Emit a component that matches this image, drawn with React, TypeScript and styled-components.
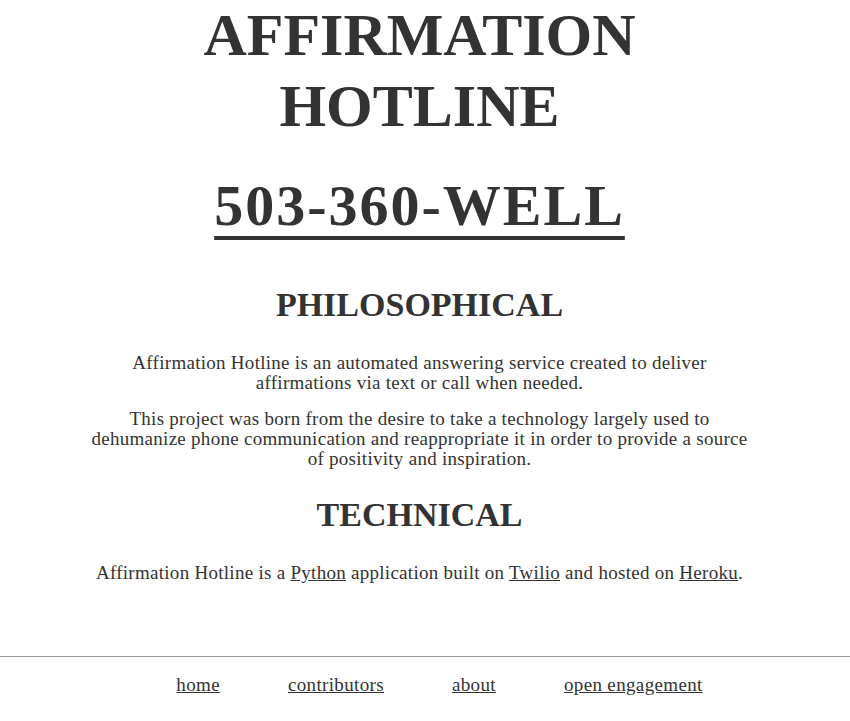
import React from "react";
import styled, { createGlobalStyle } from "styled-components";

const Global = createGlobalStyle`
  html, body { margin: 0; padding: 0; background: #fff; }
  body { color: #333; font-family: "Liberation Serif", serif; }
`;

const Page = styled.div`
  display: flex;
  flex-direction: column;
`;

const Main = styled.main`
  display: flex;
  flex-direction: column;
  align-items: center;
  padding: 0 11px 0 0;
`;

const Title = styled.h1`
  margin: 0;
  font-family: "Liberation Serif", serif;
  font-weight: 700;
  font-size: 60px;
  line-height: 71px;
  text-align: center;
  color: #333;
`;

const Phone = styled.a`
  margin-top: 30px;
  font-family: "Liberation Serif", serif;
  font-weight: 700;
  font-size: 58px;
  letter-spacing: 2px;
  line-height: 68px;
  color: #333;
  text-decoration: underline;
  text-decoration-thickness: 4px;
  text-underline-offset: 11px;
`;

const SectionTitle = styled.h2<{ $top: number }>`
  margin: ${(p) => p.$top}px 0 30px;
  font-family: "Liberation Serif", serif;
  font-weight: 700;
  font-size: 34px;
  line-height: 36px;
  text-align: center;
  color: #333;
`;

const Text = styled.p`
  margin: 0 0 16px;
  max-width: 668px;
  font-family: "Liberation Serif", serif;
  font-size: 19px;
  letter-spacing: 0.28px;
  line-height: 20px;
  text-align: center;
  color: #333;
`;

const Link = styled.a`
  color: #333;
  text-decoration: underline;
`;

const Rule = styled.hr`
  margin: 57px 0 0;
  border: 0;
  border-top: 1px solid #999;
  width: 100%;
`;

const Footer = styled.nav`
  display: flex;
  justify-content: center;
  gap: 68px;
  padding: 18px 0 0 29px;
`;

const NavLink = styled.a`
  font-family: "Liberation Serif", serif;
  font-size: 19px;
  letter-spacing: 0.35px;
  line-height: 20px;
  color: #333;
  text-decoration: underline;
`;

export default function App() {
  return (
    <Page>
      <Global />
      <Main>
        <Title>
          AFFIRMATION
          <br />
          HOTLINE
        </Title>
        <Phone href="#">503-360-WELL</Phone>
        <SectionTitle $top={47}>PHILOSOPHICAL</SectionTitle>
        <Text>
          Affirmation Hotline is an automated answering service created to deliver affirmations via text or call when needed.
        </Text>
        <Text>
          This project was born from the desire to take a technology largely used to dehumanize phone communication and reappropriate it in order to provide a source of positivity and inspiration.
        </Text>
        <SectionTitle $top={12}>TECHNICAL</SectionTitle>
        <Text>
          Affirmation Hotline is a <Link href="#">Python</Link> application built on <Link href="#">Twilio</Link> and hosted on <Link href="#">Heroku</Link>.
        </Text>
      </Main>
      <Rule />
      <Footer>
        <NavLink href="#">home</NavLink>
        <NavLink href="#">contributors</NavLink>
        <NavLink href="#">about</NavLink>
        <NavLink href="#">open engagement</NavLink>
      </Footer>
    </Page>
  );
}
